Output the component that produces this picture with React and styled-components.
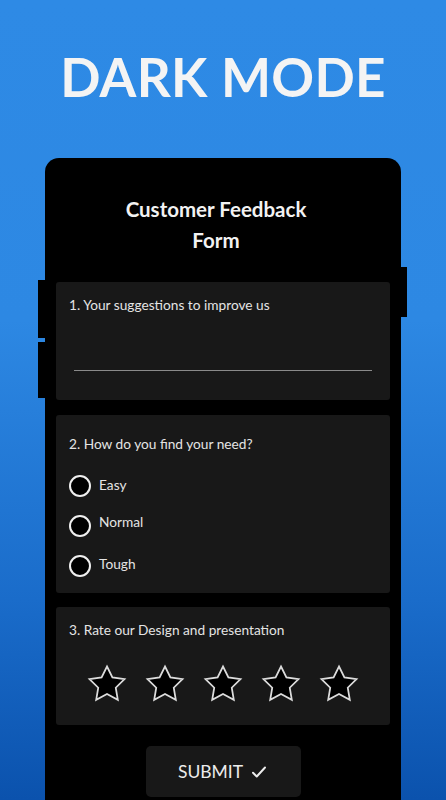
import React from "react";
import styled, { createGlobalStyle } from "styled-components";

const GlobalStyle = createGlobalStyle`
  html, body { margin: 0; padding: 0; }
  body {
    font-family: "Lato", "Open Sans", sans-serif;
    background: #2d8ae5;
  }
  * { box-sizing: border-box; }
`;

const Page = styled.div`
  width: 446px;
  height: 800px;
  overflow: hidden;
  display: flex;
  flex-direction: column;
  align-items: center;
  background: linear-gradient(180deg, #2e8ae5 0%, #2d88e3 40%, #1a6cca 75%, #0b52ad 100%);
`;

const Heading = styled.h1`
  margin: 45px 0 0;
  height: 64px;
  line-height: 64px;
  font-size: 53px;
  font-weight: 700;
  letter-spacing: 0.3px;
  color: #f4f4f4;
`;

const Phone = styled.div`
  position: relative;
  margin-top: 49px;
  width: 356px;
  flex: 1;
  background: #000;
  border-radius: 14px 14px 0 0;
  padding: 36px 11px 0;
  display: flex;
  flex-direction: column;
`;

const SideButton = styled.span`
  position: absolute;
  width: 7px;
  background: #000;
  top: ${(p) => p.$top}px;
  height: ${(p) => p.$h}px;
  ${(p) => (p.$side === "left" ? "left: -7px;" : "right: -6px;")}
`;

const FormTitle = styled.h2`
  margin: 0 auto;
  width: 215px;
  text-align: center;
  font-size: 20.5px;
  line-height: 31px;
  font-weight: 700;
  color: #f2f2f2;
  transform: translateX(-7px);
`;

const Card = styled.div`
  background: #181818;
  border-radius: 3px;
  padding: ${(p) => p.$pad};
  margin-top: ${(p) => p.$mt}px;
  display: flex;
  flex-direction: column;
`;

const Label = styled.div`
  font-size: 13.7px;
  line-height: 18px;
  color: #e4e4e4;
`;

const TextInput = styled.input`
  margin: 0 5px;
  height: 57px;
  background: transparent;
  border: none;
  border-bottom: 1px solid #8a8a8a;
  outline: none;
  color: #eee;
  font: inherit;
`;

const Options = styled.div`
  margin-top: 13px;
  display: flex;
  flex-direction: column;
`;

const Option = styled.label`
  height: 40px;
  display: flex;
  align-items: center;
  gap: 8px;
`;

const Circle = styled.span`
  width: 22px;
  height: 22px;
  border-radius: 50%;
  border: 2px solid #efefef;
  background: #000;
  flex-shrink: 0;
`;

const OptionText = styled.span`
  font-size: 13.7px;
  color: #e4e4e4;
  padding-bottom: ${(p) => p.$up}px;
`;

const Stars = styled.div`
  margin-top: 24px;
  display: flex;
  justify-content: center;
  gap: 16px;
`;

const Submit = styled.button`
  margin: 21px auto 0;
  width: 155px;
  height: 51px;
  background: #181818;
  border: none;
  border-radius: 5px;
  color: #ececec;
  font-family: inherit;
  font-size: 17.5px;
  display: flex;
  align-items: center;
  justify-content: center;
  gap: 7px;
`;

const Star = () => (
  <svg width="42" height="42" viewBox="0 0 24 24">
    <polygon
      points="12,2 15.09,8.26 22,9.27 17,14.14 18.18,21.02 12,17.77 5.82,21.02 7,14.14 2,9.27 8.91,8.26"
      fill="#000"
      stroke="#dcdcdc"
      strokeWidth="1"
      strokeLinejoin="miter"
    />
  </svg>
);

const Check = () => (
  <svg width="18" height="18" viewBox="0 0 24 24" fill="none" stroke="#ececec" strokeWidth="2.6" strokeLinecap="round" strokeLinejoin="round">
    <path d="M4 13l5 5L20 6" />
  </svg>
);

export default function App() {
  const options = [
    { t: "Easy", up: 4 },
    { t: "Normal", up: 9 },
    { t: "Tough", up: 6 },
  ];
  return (
    <>
      <GlobalStyle />
      <Page>
        <Heading>DARK MODE</Heading>
        <Phone>
          <SideButton $side="left" $top={122} $h={58} />
          <SideButton $side="left" $top={184} $h={56} />
          <SideButton $side="right" $top={109} $h={50} />
          <FormTitle>Customer Feedback Form</FormTitle>
          <Card $mt={26} $pad="14px 13px 29px">
            <Label>1. Your suggestions to improve us</Label>
            <TextInput type="text" />
          </Card>
          <Card $mt={15} $pad="20px 13px 7px">
            <Label>2. How do you find your need?</Label>
            <Options>
              {options.map((o) => (
                <Option key={o.t}>
                  <Circle />
                  <OptionText $up={o.up}>{o.t}</OptionText>
                </Option>
              ))}
            </Options>
          </Card>
          <Card $mt={14} $pad="14px 13px 20px">
            <Label>3. Rate our Design and presentation</Label>
            <Stars>
              {[0, 1, 2, 3, 4].map((i) => (
                <Star key={i} />
              ))}
            </Stars>
          </Card>
          <Submit>
            SUBMIT <Check />
          </Submit>
        </Phone>
      </Page>
    </>
  );
}
